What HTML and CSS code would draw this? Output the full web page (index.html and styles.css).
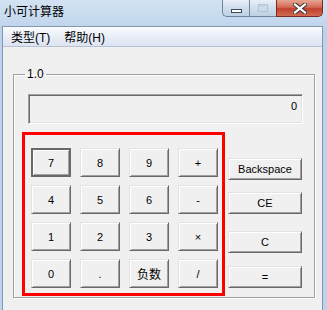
FILE: index.html
```html
<!DOCTYPE html>
<html lang="zh-CN">
<head>
  <meta charset="UTF-8" />
  <title>小可计算器</title>
  <link rel="stylesheet" href="styles.css">
</head>
<body>
  <div class="titlebar">
    <span class="title">小可计算器</span>
    <div class="caption">
      <span class="cap cap-min"><i></i></span>
      <span class="cap cap-max"><i></i></span>
      <span class="cap cap-close">
        <svg width="14" height="11" viewBox="0 0 14 11">
          <path d="M2 1.5 L12 9.5 M12 1.5 L2 9.5" stroke="#3b3b3b" stroke-width="4.2" stroke-linecap="square"/>
          <path d="M2 1.5 L12 9.5 M12 1.5 L2 9.5" stroke="#fff" stroke-width="2.2" stroke-linecap="square"/>
        </svg>
      </span>
    </div>
  </div>

  <div class="client">
    <div class="menubar">
      <span>类型(T)</span>
      <span>帮助(H)</span>
    </div>

    <fieldset class="group">
      <legend>1.0</legend>
      <div class="display">0</div>
      <div class="pad-row">
        <div class="keypad">
          <button class="btn default">7</button>
          <button class="btn">8</button>
          <button class="btn">9</button>
          <button class="btn">+</button>
          <button class="btn">4</button>
          <button class="btn">5</button>
          <button class="btn">6</button>
          <button class="btn">-</button>
          <button class="btn">1</button>
          <button class="btn">2</button>
          <button class="btn">3</button>
          <button class="btn">×</button>
          <button class="btn">0</button>
          <button class="btn">.</button>
          <button class="btn cjk">负数</button>
          <button class="btn">/</button>
        </div>
        <div class="side">
          <button class="btn wide">Backspace</button>
          <button class="btn wide">CE</button>
          <button class="btn wide">C</button>
          <button class="btn wide">=</button>
        </div>
      </div>
    </fieldset>
  </div>
</body>
</html>
```

FILE: styles.css
```css
body {
  margin: 0;
  width: 327px;
  height: 310px;
  overflow: hidden;
  background: #bcd3eb;
  font-family: 'Liberation Sans', 'Noto Sans CJK SC', sans-serif;
  color: #000;
}
.titlebar {
  height: 26px;
  display: flex;
  align-items: flex-start;
  background: linear-gradient(180deg, #d4e3f3, #c0d6ed);
}
.title {
  margin: 5px 0 0 4px;
  font-size: 12px;
  line-height: 14px;
  color: #000;
}
.caption {
  margin-left: auto;
  margin-right: 4px;
  display: flex;
  height: 17px;
}
.cap {
  display: flex;
  align-items: center;
  justify-content: center;
  height: 17px;
  box-sizing: border-box;
  border: 1px solid #6f84a0;
  border-top: none;
}
.cap-min {
  width: 27px;
  border-radius: 0 0 0 5px;
  border-right: none;
  background: linear-gradient(180deg, #e9f0f8, #d0dded 50%, #bfd0e4);
}
.cap-min i {
  display: block;
  width: 9px;
  height: 2px;
  margin-top: 5px;
  background: #fff;
  border: 1px solid #3d4a5c;
}
.cap-max {
  width: 27px;
  border-right: none;
  background: linear-gradient(180deg, #e9f0f8, #d0dded 50%, #bfd0e4);
}
.cap-max i {
  display: block;
  width: 8px;
  height: 6px;
  border: 1px solid #b4c3d6;
  box-shadow: inset 0 2px 0 #c9d5e4;
}
.cap-close {
  width: 47px;
  border-radius: 0 0 5px 0;
  border-color: #7a2a22;
  background: linear-gradient(180deg, #e7a594, #d46a55 45%, #c0412c 55%, #d36a52);
}
.client {
  margin: 0 4px 0 2px;
  height: 290px;
  background: #f0f0f0;
  border: 1px solid #8497af;
  border-bottom: none;
}
.menubar {
  height: 19px;
  display: flex;
  align-items: center;
  gap: 14px;
  padding-left: 8px;
  font-size: 12px;
  background: linear-gradient(180deg, #fbfcfe, #e9eef7 50%, #dde4f1);
  border-bottom: 1px solid #b8c2d4;
}
.group {
  margin: 21px 7px 0 10px;
  padding: 0 11px 1px 8px;
  border: 1px solid #a0a0a0;
  box-shadow: inset 1px 1px 0 #fff, 1px 1px 0 #fff;
  min-width: 0;
}
.group legend {
  margin-left: 3px;
  padding: 0 2px;
  font-size: 12px;
  line-height: 12px;
}
.display {
  margin: 14px 0 0 6px;
  box-sizing: border-box;
  height: 30px;
  padding: 5px 5px 0 0;
  text-align: right;
  font-size: 11px;
  border: 1px solid;
  border-color: #a0a0a0 #fff #fff #a0a0a0;
  box-shadow: inset 1px 1px 0 #696969, inset -1px -1px 0 #e3e3e3;
}
.pad-row {
  display: flex;
  gap: 3px;
  margin-top: 8px;
}
.keypad {
  display: grid;
  grid-template-columns: repeat(4, 40px);
  grid-auto-rows: 29px;
  column-gap: 9px;
  row-gap: 8px;
  padding: 13px 4px 5px 6px;
  border: 3px solid #ff0000;
}
.side {
  display: flex;
  flex-direction: column;
  padding-top: 26px;
}
.btn {
  margin: 0;
  padding: 0;
  font-family: 'Liberation Sans', 'Noto Sans CJK SC', sans-serif;
  font-size: 11px;
  color: #000;
  background: #f0f0f0;
  border: 1px solid;
  border-color: #e3e3e3 #696969 #696969 #e3e3e3;
  box-shadow: inset 1px 1px 0 #fff, inset -1px -1px 0 #a0a0a0;
}
.btn.cjk {
  font-size: 12px;
}
.btn.default {
  border: 2px solid #696969;
  box-shadow: inset 1px 1px 0 #fff, inset -1px -1px 0 #a0a0a0;
}
.btn.wide {
  width: 74px;
  height: 22px;
}
.side .btn:nth-child(2) { margin-top: 12px; }
.side .btn:nth-child(3) { margin-top: 17px; }
.side .btn:nth-child(4) { margin-top: 13px; }
```
